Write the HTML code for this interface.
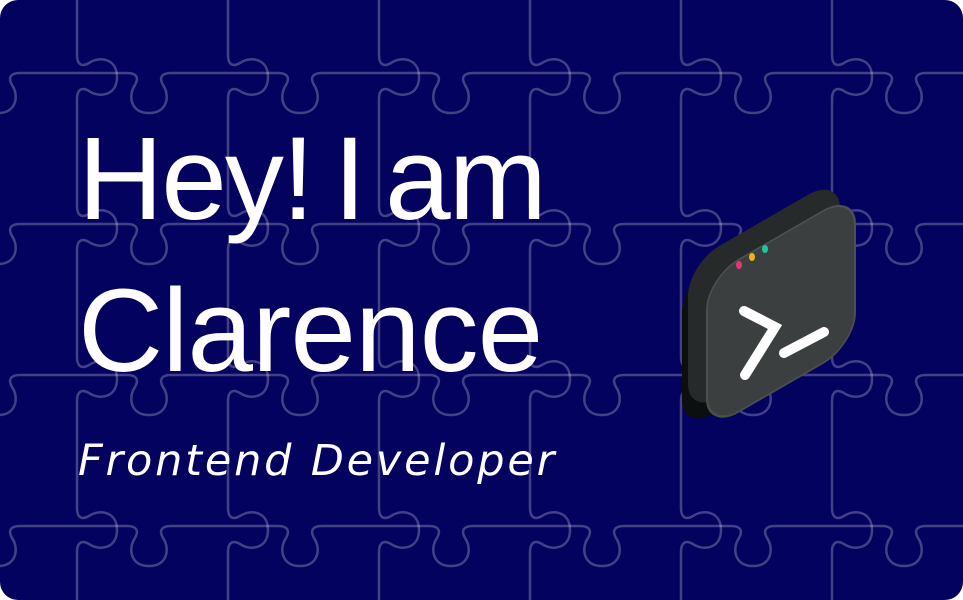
<!DOCTYPE html>
<html><head><meta charset="utf-8"><style>
html,body{margin:0;padding:0;background:#fff;}
.card{position:relative;width:963px;height:600px;border-radius:18px;overflow:hidden;background:#03025e;}
svg.bg{position:absolute;left:0;top:0;}
.t{position:absolute;left:78px;color:#fff;font-family:"Liberation Sans",sans-serif;font-size:118px;line-height:1;letter-spacing:-1px;}
.s{position:absolute;left:78px;top:436px;color:#fff;font-family:"DejaVu Sans",cursive;font-style:italic;font-size:43px;letter-spacing:2.8px;}
</style></head><body>
<div class="card">
<svg class="bg" width="963" height="600">
<defs>
<pattern id="p" x="37" y="33" width="151" height="151" patternUnits="userSpaceOnUse">
<g fill="none" stroke="rgba(255,255,255,0.25)" stroke-width="2.5">
<path d="M0 40 H90 c10 0 12 5 8 12 c-7 10 -5 28 14 28 c19 0 21 -18 14 -28 c-4 -7 -2 -12 8 -12 H151"/>
<path d="M40 0 V22 c0 10 5 12 12 8 c10 -7 28 -5 28 14 c0 19 -18 21 -28 14 c-7 -4 -12 -2 -12 8 V151"/>
</g>
</pattern>
</defs>
<rect width="963" height="600" fill="url(#p)"/>
</svg>
<div class="t" style="top:120px;word-spacing:-10px;letter-spacing:-2px">Hey! I am</div>
<div class="t" style="top:272px">Clarence</div>
<div class="s">Frontend Developer</div>
<svg class="bg" width="963" height="600">
<g transform="translate(682,280) skewY(-30)">
<rect x="0" y="0" width="150" height="152" rx="32" fill="#0b0f0f"/>
</g>
<g transform="translate(688,264) skewY(-30)">
<rect x="0" y="0" width="152" height="152" rx="32" fill="#262a2b"/>
</g>
<g transform="translate(707,278) skewY(-30)">
<rect x="0" y="0" width="148" height="152" rx="32" fill="#3b3f40" stroke="#4a4f50" stroke-width="2"/>
</g>
<ellipse cx="739" cy="265" rx="3" ry="4" fill="#e8356b"/>
<ellipse cx="752" cy="257" rx="3" ry="4" fill="#f2b21b"/>
<ellipse cx="765" cy="249" rx="3" ry="4" fill="#1dc8a0"/>
<g stroke="#fff" stroke-width="10" stroke-linecap="round" fill="none">
<path d="M744 311 L775 327 L745 375"/>
<path d="M784 353 L824 332"/>
</g>
</svg>
</div>
</body></html>
